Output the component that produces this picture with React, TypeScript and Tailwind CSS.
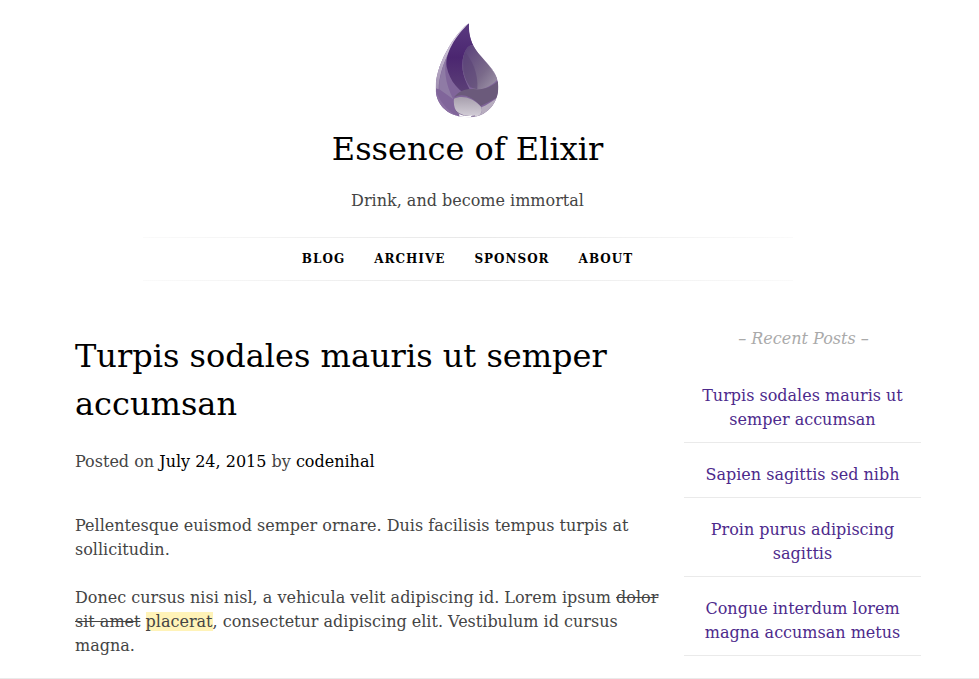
const posts = [
  "Turpis sodales mauris ut semper accumsan",
  "Sapien sagittis sed nibh",
  "Proin purus adipiscing sagittis",
  "Congue interdum lorem magna accumsan metus",
]

const navLinks = ["Blog", "Archive", "Sponsor", "About"]

function Logo() {
  return (
    <svg width="95" height="115" viewBox="0 0 285 345" className="block">
      <defs>
        <clipPath id="drop">
          <path d="M147 40C120 55 47 150 47 235C47 290 90 322 145 322C200 322 235 280 235 230C235 190 205 165 175 130C155 105 145 75 147 40Z" />
        </clipPath>
        <linearGradient id="leftEdge" x1="0" y1="0" x2="0" y2="1">
          <stop offset="0" stopColor="#e4deea" />
          <stop offset="1" stopColor="#9f8eb0" />
        </linearGradient>
        <linearGradient id="darkBand" x1="0" y1="0" x2="0" y2="1">
          <stop offset="0" stopColor="#5a3a80" />
          <stop offset="0.45" stopColor="#4b2670" />
          <stop offset="1" stopColor="#5f4578" />
        </linearGradient>
        <linearGradient id="midGrey" x1="0" y1="0" x2="1" y2="1">
          <stop offset="0" stopColor="#583d7a" />
          <stop offset="0.6" stopColor="#7a6a8a" />
          <stop offset="1" stopColor="#a59cae" />
        </linearGradient>
        <linearGradient id="bottomGrey" x1="0" y1="0" x2="0" y2="1">
          <stop offset="0" stopColor="#a79fad" />
          <stop offset="1" stopColor="#d8d3dc" />
        </linearGradient>
      </defs>
      <g clipPath="url(#drop)">
        <rect x="0" y="0" width="285" height="345" fill="#80659a" />
        <path d="M147 40C100 75 47 150 47 235L56 238C58 170 95 100 147 40Z" fill="url(#leftEdge)" />
        <path d="M147 40C105 80 56 170 58 238L100 268C75 220 68 170 85 130C100 95 125 65 147 40Z" fill="#8f7ba5" />
        <path d="M147 40C105 80 75 130 80 170C90 215 115 245 165 268C140 222 122 190 128 150C134 115 152 100 162 108C152 90 146 65 147 40Z" fill="url(#darkBand)" />
        <path d="M162 108C148 100 134 115 128 150C122 190 140 222 165 240C195 240 220 225 235 205C220 175 190 150 162 108Z" fill="url(#midGrey)" />
        <path d="M135 125C155 150 175 185 172 238L150 232C130 205 125 160 135 125Z" fill="#5a4174" opacity="0.55" />
        <path d="M150 40C150 80 160 110 180 135C205 165 230 190 240 225L232 190C210 165 180 130 165 100Z" fill="#cfc8d6" />
        <path d="M102 262C118 242 140 235 165 238C195 240 220 228 240 208L240 258C215 272 195 282 182 288C150 255 125 250 102 262Z" fill="#6b5a7b" />
        <path d="M102 266C125 255 160 262 184 292C192 312 170 328 145 324C115 320 98 298 102 266Z" fill="url(#bottomGrey)" />
        <path d="M184 292C200 285 222 272 240 256L232 292L200 325L165 325C180 318 190 305 184 292Z" fill="#b7adbf" />
        <path d="M47 240C60 280 90 310 125 325L70 325L40 280Z" fill="#8b70a3" />
        <path d="M105 300C120 318 145 322 165 318" fill="none" stroke="#7d6693" strokeWidth="3" />
        <path d="M118 312C130 319 145 319 156 316L150 326L118 324Z" fill="#ffffff" />
      </g>
    </svg>
  )
}

export default function App() {
  return (
    <div className="h-screen overflow-hidden flex flex-col bg-white font-['DejaVu_Serif',serif] text-[#444]">
      <div className="flex-1 min-h-0 overflow-hidden border-b border-[#eaeaea]">
        <div className="w-[935px]">
          <header className="flex flex-col items-center pt-[10px]">
            <Logo />
            <h1 className="text-[32px] leading-[48px] text-black font-normal">Essence of Elixir</h1>
            <p className="mt-[16px] text-[16px] leading-[24px]">Drink, and become immortal</p>
          </header>

          <nav className="relative mt-[24px] ml-[143px] w-[650px] h-[44px] pr-[1px] flex items-center justify-center gap-[29px]">
            <div className="absolute top-0 left-0 right-0 h-px bg-gradient-to-r from-[#fafafa] via-[#e8e8e8] to-[#fafafa]" />
            <div className="absolute bottom-0 left-0 right-0 h-px bg-gradient-to-r from-[#fafafa] via-[#e8e8e8] to-[#fafafa]" />
            {navLinks.map((link) => (
              <a key={link} href="#" className="text-[12px] font-bold uppercase tracking-[1px] text-black">
                {link}
              </a>
            ))}
          </nav>

          <div className="flex mt-[45px] pl-[75px]">
            <main className="w-[586px]">
              <h2 className="mt-[6px] text-[32px] leading-[48px] text-black font-normal">
                Turpis sodales mauris ut semper accumsan
              </h2>
              <p className="mt-[22px] text-[16px] leading-[24px]">
                Posted on <a href="#" className="text-black">July 24, 2015</a> by <a href="#" className="text-black">codenihal</a>
              </p>
              <p className="mt-[40px] text-[16px] leading-[24px]">
                Pellentesque euismod semper ornare. Duis facilisis tempus turpis at sollicitudin.
              </p>
              <p className="mt-[24px] text-[16px] leading-[24px]">
                Donec cursus nisi nisl, a vehicula velit adipiscing id. Lorem ipsum <s>dolor sit amet</s>{" "}
                <mark className="bg-[#fff3b8] text-[#444]">placerat</mark>, consectetur adipiscing elit. Vestibulum id cursus magna.
              </p>
            </main>

            <aside className="ml-[23px] pt-px w-[237px] text-center text-[16px] leading-[24px]">
              <h3 className="pl-[2px] italic text-[#aaa] font-normal">– Recent Posts –</h3>
              <ul className="mt-[13px]">
                {posts.map((post) => (
                  <li key={post} className="border-b border-[#eaeaea] pt-[20px] pb-[10px]">
                    <a href="#" className="text-[#4d2a8c]">{post}</a>
                  </li>
                ))}
              </ul>
            </aside>
          </div>
        </div>
      </div>
    </div>
  )
}
